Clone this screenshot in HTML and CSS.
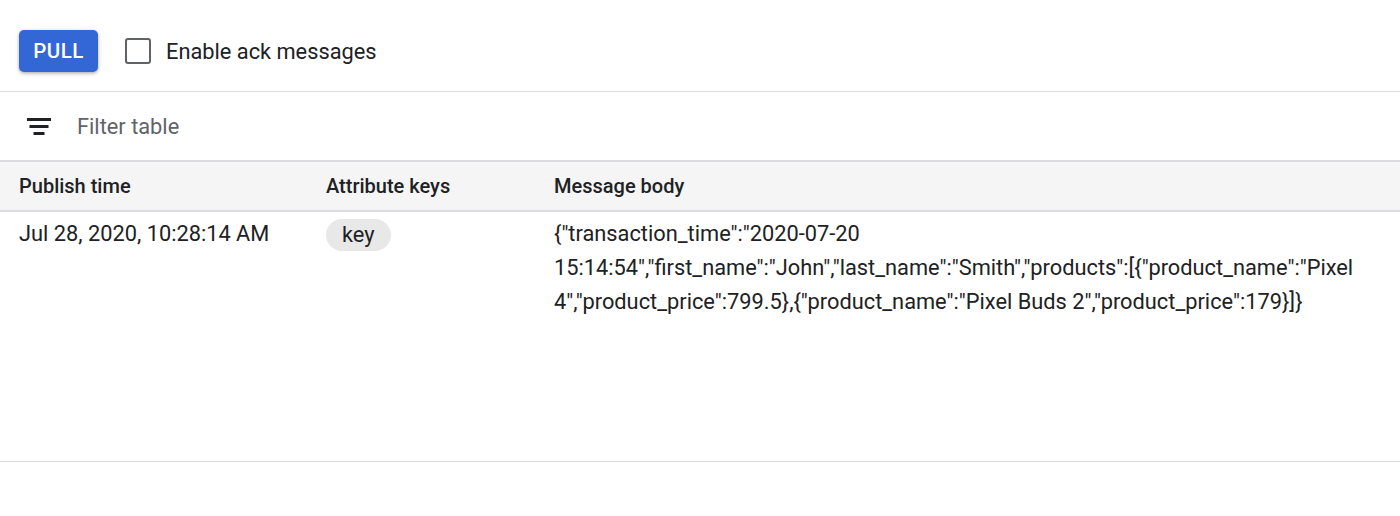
FILE: index.html
```html
<!DOCTYPE html>
<html lang="en">
<head>
<meta charset="utf-8">
<title>Messages</title>
<link rel="stylesheet" href="styles.css">
</head>
<body>
<div class="page">
  <div class="toolbar">
    <button class="pull-btn">PULL</button>
    <label class="check">
      <span class="box"></span>
      <span class="check-label">Enable ack messages</span>
    </label>
  </div>
  <div class="filter-row">
    <svg class="filter-icon" width="26" height="20" viewBox="0 0 26 20" aria-hidden="true">
      <rect x="1" y="1" width="24" height="3" fill="#202124"/>
      <rect x="3.5" y="8" width="19" height="3" fill="#202124"/>
      <rect x="7.5" y="15" width="11" height="3" fill="#202124"/>
    </svg>
    <span class="filter-text">Filter table</span>
  </div>
  <div class="table">
    <div class="thead">
      <div class="col c1">Publish time</div>
      <div class="col c2">Attribute keys</div>
      <div class="col c3">Message body</div>
    </div>
    <div class="trow">
      <div class="col c1">Jul 28, 2020, 10:28:14 AM</div>
      <div class="col c2"><span class="chip">key</span></div>
      <div class="col c3">{"transaction_time":"2020-07-20 15:14:54","first_name":"John","last_name":"Smith","products":[{"product_name":"Pixel 4","product_price":799.5},{"product_name":"Pixel Buds 2","product_price":179}]}</div>
    </div>
  </div>
</div>
</body>
</html>
```
FILE: styles.css
```css
* { box-sizing: border-box; }
html, body {
  margin: 0;
  padding: 0;
  background: #fff;
}
body {
  font-family: Roboto, "Noto Sans", Arial, sans-serif;
  font-size: 21.8px;
  color: #202124;
}
.toolbar {
  display: flex;
  align-items: center;
  height: 92px;
  padding: 11px 0 0 19px;
  border-bottom: 1px solid #dadce0;
}
.pull-btn {
  width: 79px;
  height: 42px;
  border: none;
  border-radius: 5px;
  background: #3367d6;
  color: #fff;
  font-family: Roboto, Arial, sans-serif;
  font-weight: 500;
  font-size: 20.5px;
  letter-spacing: 0.5px;
  padding: 0;
  box-shadow: 0 1px 3px rgba(60, 64, 67, 0.35), 0 2px 5px rgba(60, 64, 67, 0.15);
}
.check {
  display: flex;
  align-items: center;
  margin-left: 27px;
}
.box {
  width: 26px;
  height: 26px;
  border: 2.5px solid #5f6368;
  border-radius: 3px;
}
.check-label {
  margin-left: 15px;
  color: #202124;
  padding-top: 1px;
}
.filter-row {
  display: flex;
  align-items: center;
  height: 68px;
  padding-left: 26px;
  padding-top: 1px;
}
.filter-icon { display: block; }
.filter-text {
  margin-left: 25px;
  color: #5f6368;
}
.table {
  border-top: 2px solid #dadce0;
  border-bottom: 1px solid #dadce0;
}
.thead {
  display: flex;
  height: 50px;
  align-items: center;
  background: #f5f5f5;
  border-bottom: 2px solid #dadce0;
  font-weight: 500;
  font-size: 20px;
}
.trow {
  display: flex;
  align-items: flex-start;
  height: 249px;
  padding-top: 5px;
  line-height: 34px;
}
.col { padding-left: 19px; }
.c1 { width: 307px; }
.c2 { width: 228px; }
.c3 { width: 840px; }
.chip {
  display: inline-block;
  background: #e8e8e8;
  border-radius: 16px;
  height: 32px;
  line-height: 32px;
  padding: 0 16px;
  margin-top: 2px;
}
.trow .c2 { line-height: 0; }
```
